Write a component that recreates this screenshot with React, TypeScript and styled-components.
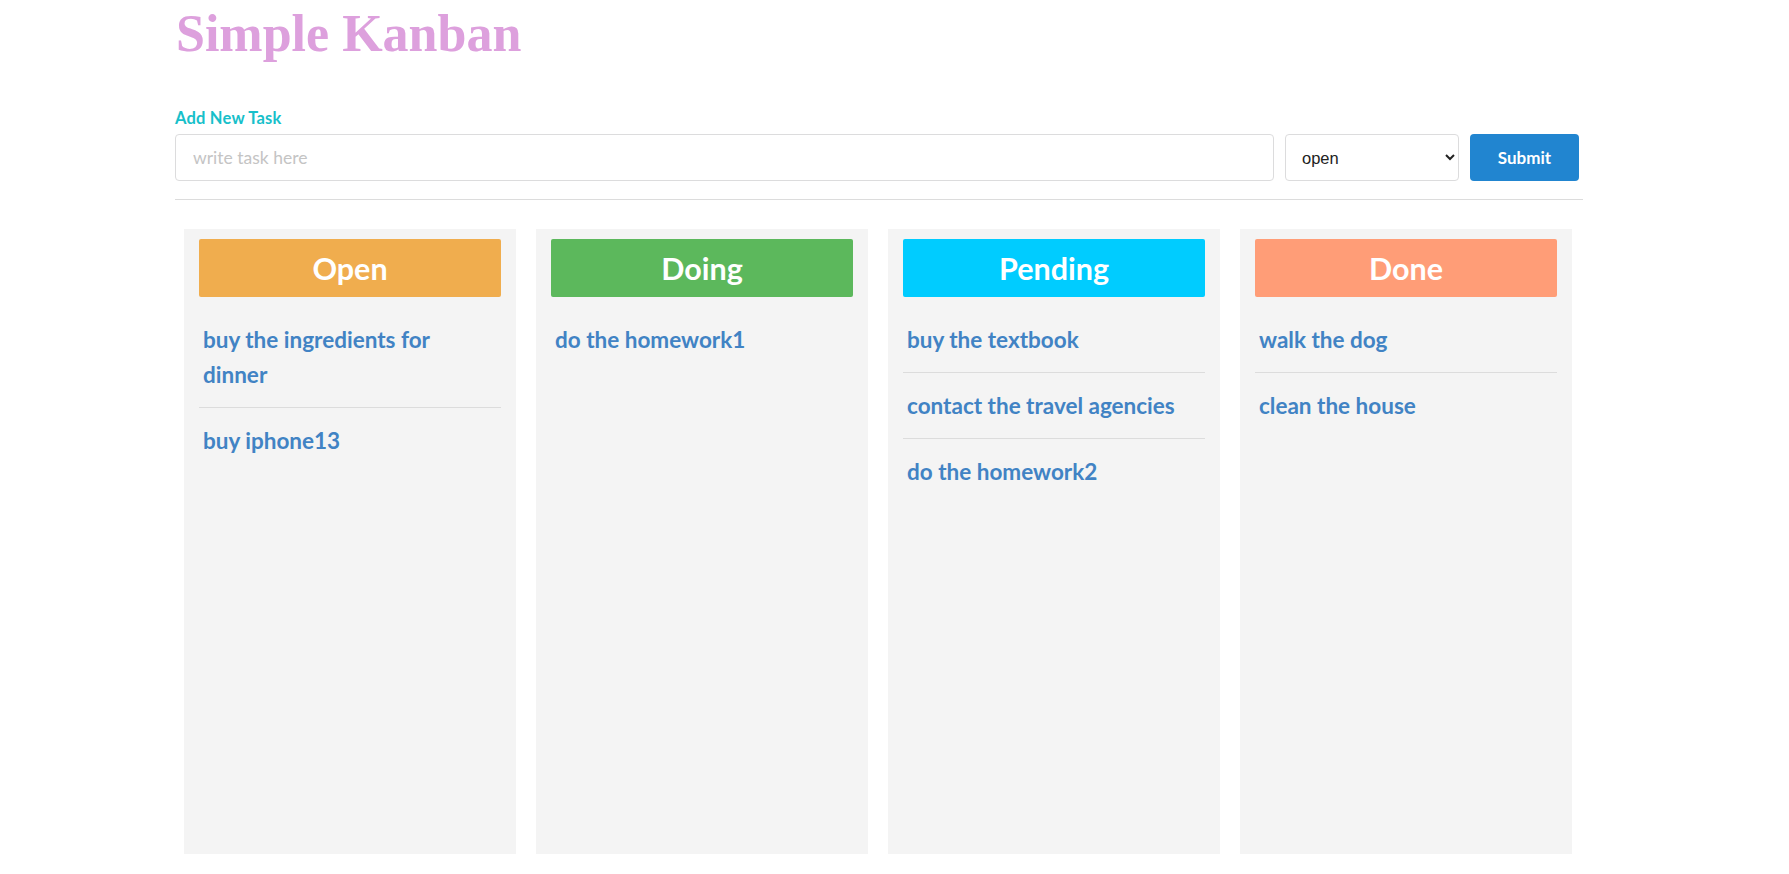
import React from "react";
import styled, { createGlobalStyle } from "styled-components";

const Global = createGlobalStyle`
  html, body { margin: 0; padding: 0; background: #ffffff; }
  body { font-family: Lato, "Noto Sans", sans-serif; }
  * { box-sizing: border-box; }
`;

const Page = styled.div`
  width: 1408px;
  margin-left: 175px;
`;

const Title = styled.h1`
  margin: 4px 0 0 1px;
  font-family: "Liberation Serif", "Times New Roman", serif;
  font-weight: 700;
  font-size: 52px;
  line-height: normal;
  color: #dda0dd;
`;

const Label = styled.label`
  display: block;
  margin-top: 46px;
  font-family: Lato, sans-serif;
  font-weight: 700;
  font-size: 16.5px;
  letter-spacing: 0.2px;
  line-height: 18px;
  color: #17c0ca;
`;

const FormRow = styled.form`
  display: flex;
  gap: 11px;
  margin-top: 7px;
  padding-right: 4px;
  height: 47px;
`;

const TextInput = styled.input`
  flex: 1;
  height: 47px;
  border: 1px solid #dcdcdd;
  border-radius: 4px;
  padding: 0 17px;
  font-family: Lato, sans-serif;
  font-size: 17.5px;
  color: #333;
  outline: none;
  &::placeholder { color: #c4c4c4; }
`;

const Select = styled.select`
  width: 174px;
  height: 47px;
  border: 1px solid #dcdcdd;
  border-radius: 4px;
  padding: 0 10px 0 12px;
  background: #fff;
  font-family: "Liberation Sans", Arial, sans-serif;
  font-size: 16.5px;
  color: #222;
`;

const SubmitButton = styled.button`
  width: 109px;
  height: 47px;
  border: none;
  border-radius: 4px;
  background: #2185d0;
  color: #fff;
  font-family: Lato, sans-serif;
  font-weight: 700;
  font-size: 17px;
  cursor: pointer;
`;

const Divider = styled.hr`
  margin: 18px 0 0;
  border: none;
  border-top: 1px solid #dcdcdc;
  height: 0;
`;

const Board = styled.div`
  display: grid;
  grid-template-columns: repeat(4, 332px);
  gap: 20px;
  padding: 0 0 0 9px;
  margin-top: 29px;
`;

const Column = styled.section`
  background: #f4f4f4;
  height: 625px;
  padding: 10px 15px;
`;

const ColumnHeader = styled.h2<{ $bg: string }>`
  margin: 0;
  height: 58px;
  border-radius: 2px;
  background: ${(p) => p.$bg};
  color: #fff;
  font-family: Lato, sans-serif;
  font-weight: 700;
  font-size: 30.5px;
  line-height: 58px;
  text-align: center;
`;

const TaskList = styled.ul`
  list-style: none;
  margin: 10px 0 0;
  padding: 0;
`;

const Task = styled.li`
  padding: 15px 4px;
  font-family: Lato, sans-serif;
  font-weight: 700;
  font-size: 22.5px;
  line-height: 35px;
  color: #4183c4;
  & + & { border-top: 1px solid #dcdcdc; }
`;

const columns = [
  { title: "Open", color: "#f0ad4e", tasks: ["buy the ingredients for dinner", "buy iphone13"] },
  { title: "Doing", color: "#5cb85c", tasks: ["do the homework1"] },
  {
    title: "Pending",
    color: "#00ccff",
    tasks: ["buy the textbook", "contact the travel agencies", "do the homework2"],
  },
  { title: "Done", color: "#ff9d77", tasks: ["walk the dog", "clean the house"] },
];

export default function App() {
  return (
    <>
      <Global />
      <Page>
        <Title>Simple Kanban</Title>
        <Label htmlFor="task">Add New Task</Label>
        <FormRow onSubmit={(e) => e.preventDefault()}>
          <TextInput id="task" placeholder="write task here" />
          <Select defaultValue="open">
            <option value="open">open</option>
            <option value="doing">doing</option>
            <option value="pending">pending</option>
            <option value="done">done</option>
          </Select>
          <SubmitButton type="submit">Submit</SubmitButton>
        </FormRow>
        <Divider />
        <Board>
          {columns.map((c) => (
            <Column key={c.title}>
              <ColumnHeader $bg={c.color}>{c.title}</ColumnHeader>
              <TaskList>
                {c.tasks.map((t) => (
                  <Task key={t}>{t}</Task>
                ))}
              </TaskList>
            </Column>
          ))}
        </Board>
      </Page>
    </>
  );
}
